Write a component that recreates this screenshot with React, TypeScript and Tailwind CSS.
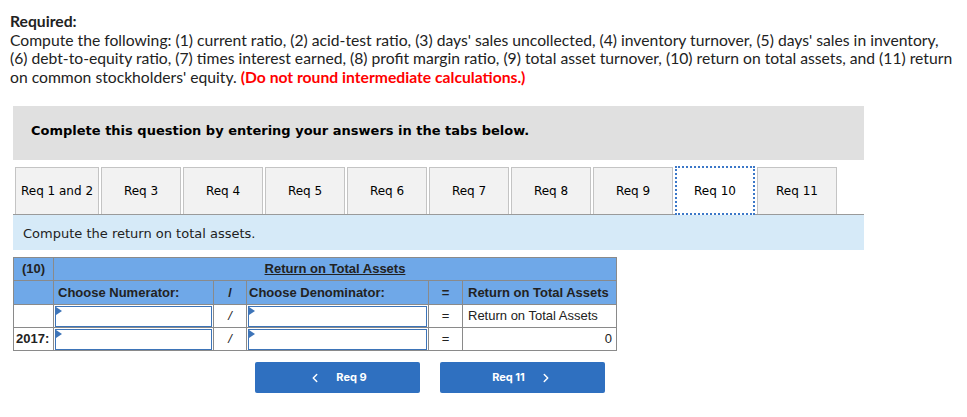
import { ChevronLeft, ChevronRight } from 'lucide-react';

const PROXIMA = { fontFamily: "Lato, 'Open Sans', sans-serif" };
const VERDANA = { fontFamily: "'DejaVu Sans', Verdana, sans-serif" };
const ARIAL = { fontFamily: "'Liberation Sans', Arial, sans-serif" };

const TABS = ['Req 1 and 2', 'Req 3', 'Req 4', 'Req 5', 'Req 6', 'Req 7', 'Req 8', 'Req 9', 'Req 10', 'Req 11'];

function Field() {
  return (
    <div className="relative h-[21px] mx-px border border-[#3d74b8] bg-white">
      <span className="absolute left-0 top-0 w-0 h-0 border-t-[4px] border-b-[4px] border-l-[6px] border-t-transparent border-b-transparent border-l-[#3d74b8]" />
    </div>
  );
}

export default function App() {
  return (
    <div className="w-[967px] h-[417px] bg-white overflow-hidden">
      {/* Question text */}
      <div className="pl-[10px] pt-[12px] text-[15.7px] leading-[18.5px] text-[#222]" style={PROXIMA}>
        <div className="font-bold">Required:</div>
        <div>
          Compute the following: (1) current ratio, (2) acid-test ratio, (3) days' sales uncollected, (4) inventory turnover, (5) days' sales in inventory,
          <br />
          (6) debt-to-equity ratio, (7) times interest earned, (8) profit margin ratio, (9) total asset turnover, (10) return on total assets, and (11) return
          <br />
          on common stockholders' equity. <span className="font-bold text-[#ff0000]">(Do not round intermediate calculations.)</span>
        </div>
      </div>

      <div className="ml-[13px] w-[851px]">
        {/* Instruction box */}
        <div className="mt-[20px] h-[54px] bg-[#e0e0e0] pl-[18px] pt-[11px]">
          <span className="text-[13px] font-bold text-black" style={VERDANA}>
            Complete this question by entering your answers in the tabs below.
          </span>
        </div>

        {/* Tabs */}
        <div className="mt-[7px] flex gap-[2px] pl-[2px] border-b border-[#9a9a9a]" style={VERDANA}>
          {TABS.map((t, i) => (
            <div
              key={t}
              className={`flex items-center justify-center text-[12px] text-black ${i === 0 ? 'w-[84px]' : 'w-[80px]'} ${
                t === 'Req 10'
                  ? 'bg-white border-2 border-dotted border-[#3c78c8] -mt-px h-[49px] -mb-px'
                  : 'h-[47px] bg-[#f2f2f2] border border-b-0 border-[#c4c4c4]'
              }`}
            >
              {t}
            </div>
          ))}
        </div>

        {/* Sub instruction */}
        <div className="h-[35px] bg-[#d6eaf8] flex items-center pl-[10px] pt-[2px] text-[13px] text-[#222]" style={VERDANA}>
          Compute the return on total assets.
        </div>

        {/* Ratio table */}
        <table className="mt-[7px] border-collapse text-[13px] text-[#222]" style={ARIAL}>
          <colgroup>
            <col className="w-[40px]" />
            <col className="w-[160px]" />
            <col className="w-[33px]" />
            <col className="w-[182px]" />
            <col className="w-[34px]" />
            <col className="w-[154px]" />
          </colgroup>
          <tbody>
            <tr className="h-[23px] bg-[#6fa8e8] font-bold">
              <td className="border border-[#8a8a8a] text-center">(10)</td>
              <td colSpan={5} className="border border-[#8a8a8a] text-center">
                <span className="underline">Return on Total Assets</span>
              </td>
            </tr>
            <tr className="h-[24px] bg-[#6fa8e8] font-bold">
              <td className="border border-[#8a8a8a]" />
              <td className="border border-[#8a8a8a] pl-[4px]">Choose Numerator:</td>
              <td className="border border-[#8a8a8a] text-center">/</td>
              <td className="border border-[#8a8a8a] pl-[2px]">Choose Denominator:</td>
              <td className="border border-[#8a8a8a] text-center">=</td>
              <td className="border border-[#8a8a8a] pl-[5px]">Return on Total Assets</td>
            </tr>
            <tr className="h-[23px] bg-white">
              <td className="border border-[#8a8a8a]" />
              <td className="border border-[#8a8a8a] p-0">
                <Field />
              </td>
              <td className="border border-[#8a8a8a] text-center italic">/</td>
              <td className="border border-[#8a8a8a] p-0">
                <Field />
              </td>
              <td className="border border-[#8a8a8a] text-center">=</td>
              <td className="border border-[#8a8a8a] pl-[5px]">Return on Total Assets</td>
            </tr>
            <tr className="h-[23px] bg-white">
              <td className="border border-[#8a8a8a] font-bold pl-[2px]">2017:</td>
              <td className="border border-[#8a8a8a] p-0">
                <Field />
              </td>
              <td className="border border-[#8a8a8a] text-center italic">/</td>
              <td className="border border-[#8a8a8a] p-0">
                <Field />
              </td>
              <td className="border border-[#8a8a8a] text-center">=</td>
              <td className="border border-[#8a8a8a] text-right pr-[4px]">0</td>
            </tr>
          </tbody>
        </table>

        {/* Navigation */}
        <div className="mt-[11px] ml-[242px] flex gap-[20px] text-[11px] font-bold text-white" style={{ fontFamily: "Inter, Roboto, sans-serif" }}>
          <button className="w-[165px] h-[31px] rounded-[2px] bg-[#2f70c0] flex items-center justify-center gap-[14px]">
            <ChevronLeft size={14} strokeWidth={2.5} />
            <span>Req 9</span>
          </button>
          <button className="w-[165px] h-[31px] rounded-[2px] bg-[#2f70c0] flex items-center justify-center gap-[14px]">
            <span>Req 11</span>
            <ChevronRight size={14} strokeWidth={2.5} />
          </button>
        </div>
      </div>
    </div>
  );
}
